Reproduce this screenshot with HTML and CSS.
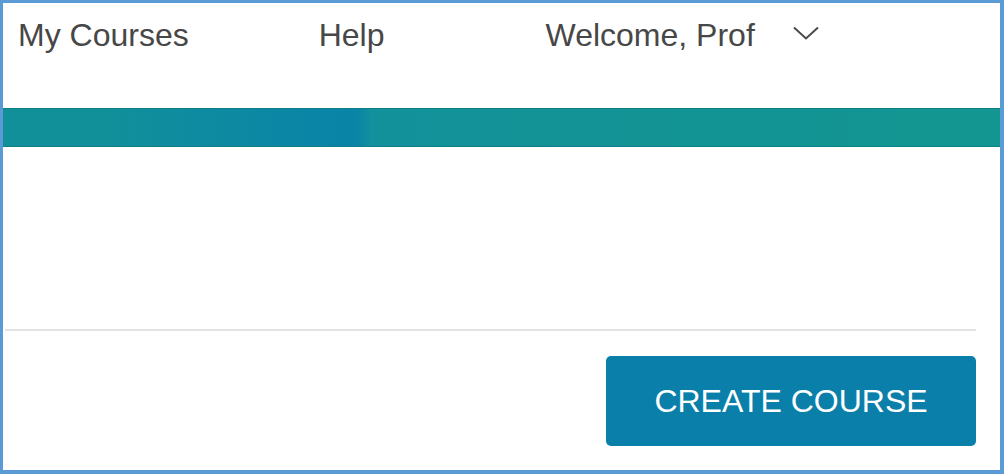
FILE: index.html
```html
<!DOCTYPE html>
<html lang="en">
<head>
<meta charset="utf-8">
<title>Courses</title>
<link rel="stylesheet" href="styles.css">
</head>
<body>
<div class="frame">
  <nav class="nav">
    <a class="nav-item nav-courses" href="#">My Courses</a>
    <a class="nav-item nav-help" href="#">Help</a>
    <span class="nav-item nav-welcome">Welcome, Prof</span>
    <span class="nav-chevron">
      <svg width="26" height="14" viewBox="0 0 26 14" aria-hidden="true">
        <polyline points="1,1.5 13,12.5 25,1.5" fill="none" stroke="#4a4a4a" stroke-width="2"/>
      </svg>
    </span>
  </nav>
  <div class="band"></div>
  <div class="content">
    <div class="spacer"></div>
    <hr class="divider">
    <div class="actions">
      <button class="btn-create" type="button">CREATE COURSE</button>
    </div>
  </div>
</div>
</body>
</html>
```
FILE: styles.css
```css
html, body {
  margin: 0;
  padding: 0;
  background: #ffffff;
}

.frame {
  width: 1004px;
  height: 474px;
  box-sizing: border-box;
  border: 3px solid #5b9bd5;
  border-right-width: 4px;
  border-bottom-width: 4px;
  background: #ffffff;
  display: flex;
  flex-direction: column;
  font-family: "Liberation Sans", Arial, sans-serif;
}

.nav {
  height: 105px;
  box-sizing: border-box;
  padding: 14px 0 0 15px;
  display: flex;
  align-items: flex-start;
}

.nav-item {
  font-size: 32px;
  line-height: 36px;
  color: #474747;
  text-decoration: none;
  white-space: nowrap;
}

.nav-help {
  margin-left: 130px;
}

.nav-welcome {
  margin-left: 161px;
}

.nav-chevron {
  margin-left: 38px;
  padding-top: 9px;
  display: flex;
}

.band {
  height: 39px;
  box-sizing: border-box;
  border-top: 1px solid #0c8088;
  border-bottom: 1px solid #0c8088;
  background: linear-gradient(90deg,
    #12909a 0%,
    #11909a 10%,
    #0e8ba0 20%,
    #0b86a5 29%,
    #0984a8 35%,
    #0a85a7 35.6%,
    #12919c 37%,
    #139395 55%,
    #139494 80%,
    #139691 100%);
}

.content {
  flex: 1;
  display: flex;
  flex-direction: column;
  padding: 0 24px 0 2px;
}

.spacer {
  height: 182px;
}

.divider {
  margin: 0;
  border: 0;
  height: 2px;
  background: #e3e3e3;
}

.actions {
  display: flex;
  justify-content: flex-end;
  padding-top: 25px;
}

.btn-create {
  width: 370px;
  height: 90px;
  border: 0;
  border-radius: 5px;
  background: #0a7fa9;
  color: #ffffff;
  font-family: "Liberation Sans", Arial, sans-serif;
  font-size: 32px;
  line-height: 36px;
  padding: 0;
  cursor: pointer;
}
```
